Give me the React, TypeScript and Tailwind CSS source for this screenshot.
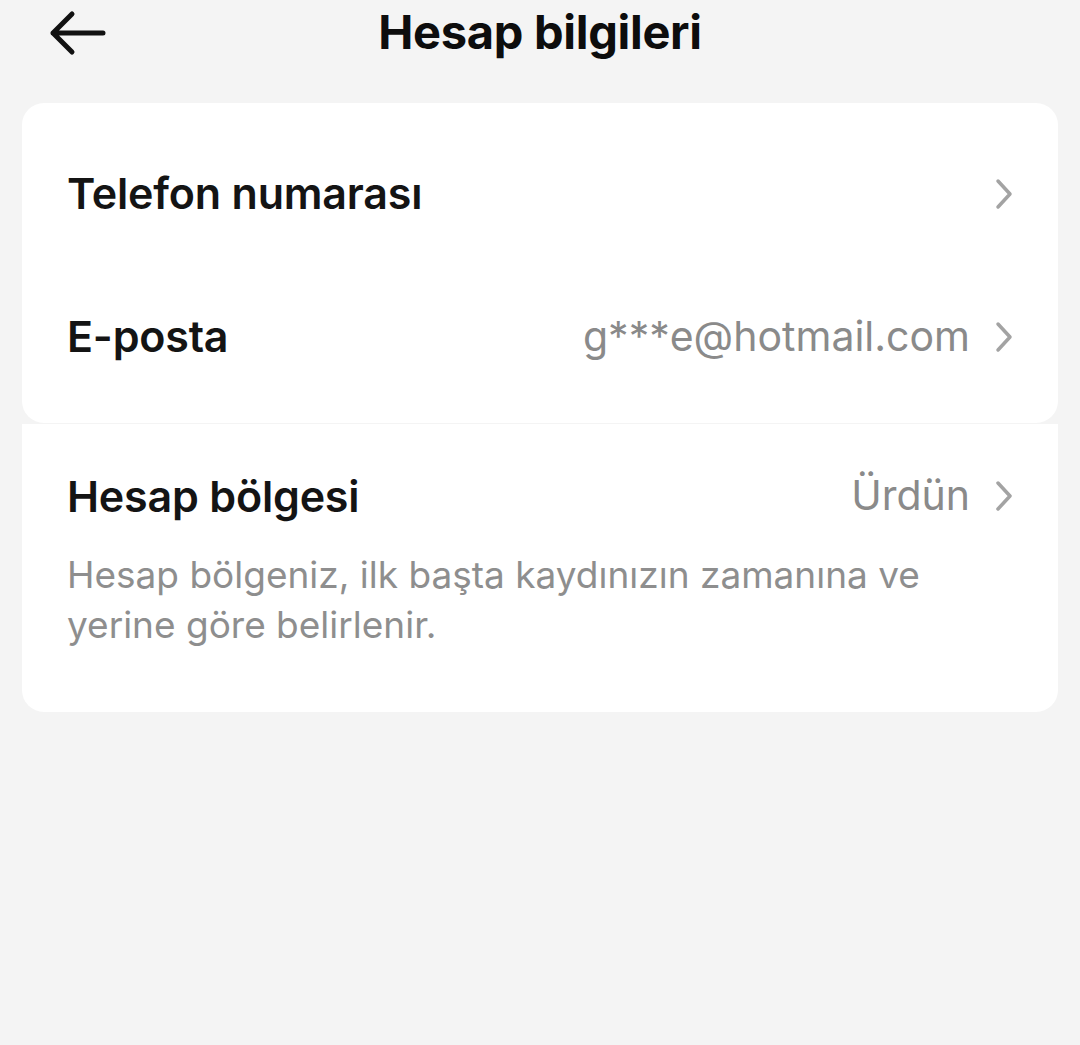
import React from 'react';

const Chevron = () => (
    <svg width="24" height="34" viewBox="0 0 24 34" fill="none" className="shrink-0">
        <path d="M6 4 L18 17 L6 30" stroke="#a3a3a3" strokeWidth="3.5" strokeLinecap="round" strokeLinejoin="round" />
    </svg>
);

const Row = ({ label, value }: { label: string; value?: string }) => (
    <div className="flex items-center justify-between h-[143px] pl-[45px] pr-[42px]">
        <span className="text-[43px] font-semibold text-[#141414] tracking-[-0.2px]">{label}</span>
        <div className="flex items-center gap-[22px]">
            {value && <span className="text-[41px] text-[#8a8a8a]">{value}</span>}
            <Chevron />
        </div>
    </div>
);

export default function App() {
    return (
        <div className="w-[1080px] h-[1045px] bg-[#f4f4f4] font-['Inter',sans-serif] overflow-hidden">

            {/* Header */}
            <div className="relative h-[66px] flex items-center justify-center">
                <svg width="60" height="50" viewBox="0 0 60 50" fill="none" className="absolute left-[47px] top-[8px]">
                    <path d="M56 25 H6 M25 6 L6 25 L25 44" stroke="#111" strokeWidth="5" strokeLinecap="round" strokeLinejoin="round" />
                </svg>
                <h1 className="text-[47px] font-bold text-[#0d0d0d] tracking-[-0.3px] leading-none -mt-[4px]">Hesap bilgileri</h1>
            </div>

            <div className="px-[22px] pt-[37px]">
                {/* Contact card */}
                <div className="bg-white rounded-[22px] pt-[19px] pb-[15px]">
                    <Row label="Telefon numarası" />
                    <Row label="E-posta" value="g***e@hotmail.com" />
                </div>

                {/* Region card */}
                <div className="bg-white rounded-b-[22px] pt-[39px] pb-[62px] mt-px">
                    <div className="flex items-center justify-between h-[66px] pl-[45px] pr-[42px]">
                        <span className="text-[43px] font-semibold text-[#141414] tracking-[-0.2px]">Hesap bölgesi</span>
                        <div className="flex items-center gap-[22px]">
                            <span className="text-[41px] text-[#8a8a8a]">Ürdün</span>
                            <Chevron />
                        </div>
                    </div>
                    <p className="mt-[21px] pl-[45px] pr-[100px] text-[37px] leading-[50px] text-[#8e8e8e]">
                        Hesap bölgeniz, ilk başta kaydınızın zamanına ve yerine göre belirlenir.
                    </p>
                </div>
            </div>
        </div>
    );
}
